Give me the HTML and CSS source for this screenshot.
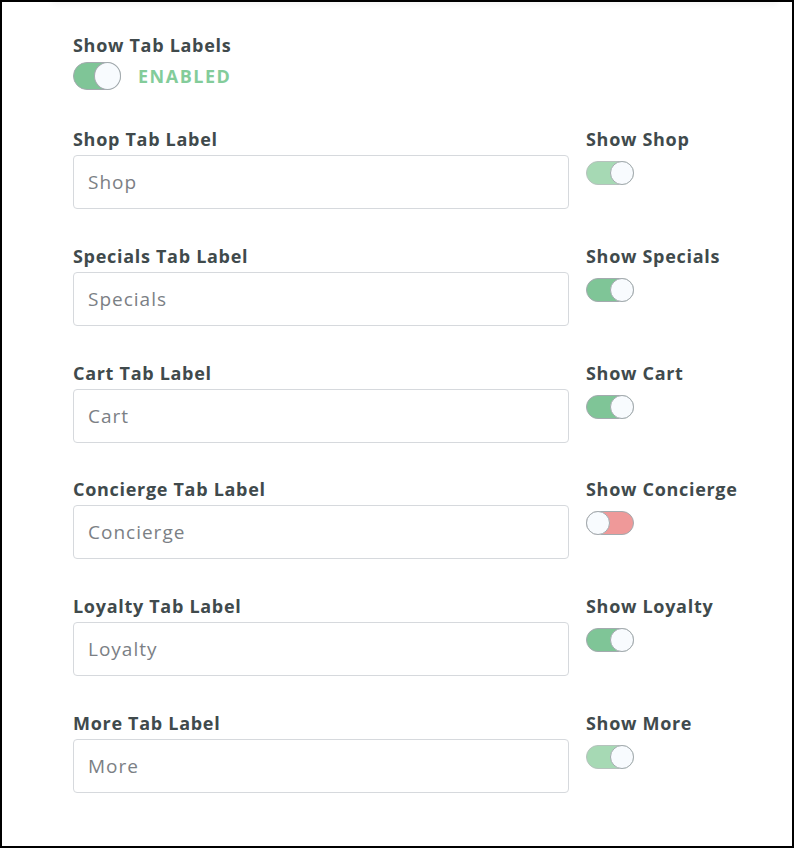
FILE: index.html
```html
<!DOCTYPE html>
<html>
<head>
<meta charset="utf-8">
<link rel="stylesheet" href="styles.css">
</head>
<body>
<div class="page">
  <div class="top-shadow"></div>
  <div class="content">
    <section class="master">
      <div class="label">Show Tab Labels</div>
      <div class="master-row">
        <span class="toggle toggle-lg on"><span class="knob"></span></span>
        <span class="status">ENABLED</span>
      </div>
    </section>
    <div class="rows">
      <div class="row">
        <div class="field">
          <div class="label">Shop Tab Label</div>
          <div class="input"><span class="placeholder">Shop</span></div>
        </div>
        <div class="switch-col">
          <div class="label">Show Shop</div>
          <span class="toggle on muted"><span class="knob"></span></span>
        </div>
      </div>
      <div class="row">
        <div class="field">
          <div class="label">Specials Tab Label</div>
          <div class="input"><span class="placeholder">Specials</span></div>
        </div>
        <div class="switch-col">
          <div class="label">Show Specials</div>
          <span class="toggle on"><span class="knob"></span></span>
        </div>
      </div>
      <div class="row">
        <div class="field">
          <div class="label">Cart Tab Label</div>
          <div class="input"><span class="placeholder">Cart</span></div>
        </div>
        <div class="switch-col">
          <div class="label">Show Cart</div>
          <span class="toggle on"><span class="knob"></span></span>
        </div>
      </div>
      <div class="row">
        <div class="field">
          <div class="label">Concierge Tab Label</div>
          <div class="input"><span class="placeholder">Concierge</span></div>
        </div>
        <div class="switch-col">
          <div class="label">Show Concierge</div>
          <span class="toggle off"><span class="knob"></span></span>
        </div>
      </div>
      <div class="row">
        <div class="field">
          <div class="label">Loyalty Tab Label</div>
          <div class="input"><span class="placeholder">Loyalty</span></div>
        </div>
        <div class="switch-col">
          <div class="label">Show Loyalty</div>
          <span class="toggle on"><span class="knob"></span></span>
        </div>
      </div>
      <div class="row">
        <div class="field">
          <div class="label">More Tab Label</div>
          <div class="input"><span class="placeholder">More</span></div>
        </div>
        <div class="switch-col">
          <div class="label">Show More</div>
          <span class="toggle on muted"><span class="knob"></span></span>
        </div>
      </div>
    </div>
  </div>
</div>
</body>
</html>
```

FILE: styles.css
```css
html, body {
  margin: 0;
  padding: 0;
  background: #ffffff;
}

body {
  font-family: "Open Sans", "Liberation Sans", sans-serif;
  color: #3f4a4c;
}

.page {
  position: relative;
  box-sizing: border-box;
  width: 794px;
  height: 848px;
  border: 2px solid #000000;
  background: #ffffff;
  overflow: hidden;
}

.top-shadow {
  position: absolute;
  left: 50px;
  right: 14px;
  top: -6px;
  height: 6px;
  box-shadow: 0 2px 6px rgba(0, 0, 0, 0.06);
}

.content {
  padding: 32px 0 0 71px;
}

.label {
  font-size: 18px;
  font-weight: 700;
  line-height: 22px;
  letter-spacing: 0.7px;
  color: #404a4c;
  white-space: nowrap;
}

.master-row {
  display: flex;
  align-items: center;
  gap: 17px;
  margin-top: 6px;
}

.status {
  font-size: 18px;
  font-weight: 700;
  letter-spacing: 1.5px;
  color: #83cc9a;
}

.rows {
  display: flex;
  flex-direction: column;
  gap: 35.8px;
  margin-top: 38px;
}

.row {
  display: grid;
  grid-template-columns: 496px auto;
  column-gap: 17px;
  align-items: start;
}

.field {
  display: flex;
  flex-direction: column;
  gap: 5px;
}

.input {
  box-sizing: border-box;
  height: 54px;
  border: 1px solid #d6d9dd;
  border-radius: 4px;
  display: flex;
  align-items: center;
  padding: 0 14px;
  background: #ffffff;
}

.placeholder {
  font-size: 19px;
  letter-spacing: 1px;
  color: #7b8085;
}

.switch-col {
  display: flex;
  flex-direction: column;
  align-items: flex-start;
  gap: 11px;
}

.toggle {
  position: relative;
  display: inline-flex;
  align-items: center;
  box-sizing: border-box;
  width: 48px;
  height: 24px;
  border-radius: 12px;
  border: 1px solid #a3aaae;
  background: #7fc597;
}

.toggle.on {
  justify-content: flex-end;
}

.toggle.off {
  justify-content: flex-start;
  background: #ef9999;
}

.toggle.muted {
  background: #a6d9b4;
  border-color: #b6c2bd;
}

.toggle .knob {
  box-sizing: border-box;
  width: 24px;
  height: 24px;
  margin: -1px;
  border-radius: 50%;
  border: 1px solid #a3aaae;
  background: #f8fbfe;
}

.toggle-lg {
  height: 28px;
  border-radius: 14px;
}

.toggle-lg .knob {
  width: 27px;
  height: 28px;
}
```
